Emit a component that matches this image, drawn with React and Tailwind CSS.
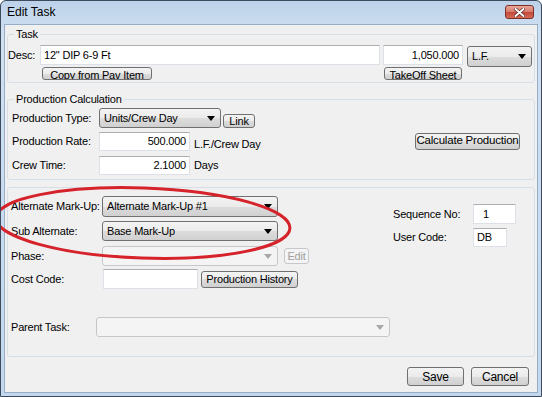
import React from 'react';

const font = { fontFamily: '"Liberation Sans", Arial, sans-serif' };

const Arrow = ({ disabled }) => (
  <svg width="8" height="5" viewBox="0 0 8 5" className="shrink-0">
    <path d="M0 0 H8 L4 5 Z" fill={disabled ? '#a8a8a8' : '#000'} />
  </svg>
);

const Combo = ({ value, className = '', disabled }) => (
  <div
    className={`flex items-center justify-between pl-[4px] pr-[5px] rounded-[3px] border ${
      disabled
        ? 'border-[#c4c8cc] bg-[#f4f4f4]'
        : 'border-[#707070] bg-[linear-gradient(#f3f3f3,#ebebeb_50%,#dddddd_50%,#d0d0d0)]'
    } ${className}`}
  >
    <span className="truncate">{value}</span>
    <Arrow disabled={disabled} />
  </div>
);

const Input = ({ value, className = '', right }) => (
  <div
    className={`flex items-center bg-white border border-[#dde1e7] border-t-[#abadb3] ${
      right ? 'justify-end pr-[3px]' : 'pl-[3px]'
    } ${className}`}
  >
    {value}
  </div>
);

const Btn = ({ children, className = '', disabled }) => (
  <div
    className={`flex items-center justify-center whitespace-nowrap overflow-hidden rounded-[3px] border ${
      disabled
        ? 'border-[#c4c8cc] bg-[#f4f4f4] text-[#a0a0a0]'
        : 'border-[#707070] bg-[linear-gradient(#f3f3f3,#ebebeb_50%,#dddddd_50%,#d0d0d0)]'
    } ${className}`}
  >
    {children}
  </div>
);

const Legend = ({ children }) => (
  <span className="self-start -mt-[7px] ml-[6px] px-[2px] bg-[#f0f0f0] leading-[13px]">{children}</span>
);

export default function App() {
  return (
    <div
      className="relative w-[542px] h-[397px] flex flex-col border border-[#3d4b5c] rounded-t-[6px] bg-[linear-gradient(#bcd2ea,#cfe0f1_30px,#c3d8ee)] text-[11px] tracking-[-0.2px] text-black overflow-hidden whitespace-nowrap"
      style={font}
    >
      {/* Title bar */}
      <div className="h-[23px] shrink-0 flex items-start pl-[6px] pr-[7px]">
        <span className="mt-[4px] text-[12px] leading-[14px] tracking-normal">Edit Task</span>
        <div className="ml-auto mt-[4px] w-[29px] h-[14px] rounded-[3px] border border-[#7d2f25] bg-[linear-gradient(#e9a89a,#d7786a_50%,#c2473a_50%,#d46b55)] flex items-center justify-center">
          <svg width="11" height="9" viewBox="0 0 11 9">
            <path d="M1.5 1 L9.5 8 M9.5 1 L1.5 8" stroke="#4a1a14" strokeWidth="3.2" strokeLinecap="round" />
            <path d="M1.5 1 L9.5 8 M9.5 1 L1.5 8" stroke="#fff" strokeWidth="2" strokeLinecap="round" />
          </svg>
        </div>
      </div>

      {/* Client area */}
      <div className="mx-[3px] h-[369px] border border-[#97aec6] bg-[#f0f0f0] flex flex-col px-[2px]">
        {/* Task */}
        <div className="mt-[9px] h-[49px] border border-[#d5dfe5] rounded-[3px] flex flex-col">
          <Legend>Task</Legend>
          <div className="mt-[4px] flex items-center h-[20px]">
            <span className="w-[32px]">Desc:</span>
            <Input value='12" DIP 6-9 Ft' className="w-[340px] h-[20px]" />
            <Input value="1,050.000" right className="ml-[3px] w-[80px] h-[20px]" />
            <Combo value="L.F." className="ml-[4px] w-[65px] h-[21px] mt-[2px]" />
          </div>
          <div className="mt-[2px] flex h-[13px]">
            <Btn className="ml-[34px] w-[110px] h-[13px] leading-[14px] items-start">Copy from Pav Item</Btn>
            <Btn className="ml-[232px] w-[78px] h-[13px] leading-[14px] items-start">TakeOff Sheet</Btn>
          </div>
        </div>

        {/* Production Calculation */}
        <div className="mt-[16px] h-[81px] border border-[#d5dfe5] rounded-[3px] flex flex-col">
          <Legend>Production Calculation</Legend>
          <div className="flex items-center">
            <div className="flex flex-col pl-[4px]">
              <div className="mt-[2px] flex items-center h-[20px]">
                <span className="w-[87px]">Production Type:</span>
                <Combo value="Units/Crew Day" className="w-[122px] h-[20px]" />
                <Btn className="ml-[2px] self-end w-[32px] h-[14px] leading-[12px]">Link</Btn>
              </div>
              <div className="mt-[4px] flex items-center h-[19px]">
                <span className="w-[87px]">Production Rate:</span>
                <Input value="500.000" right className="w-[91px] h-[19px]" />
                <span className="ml-[4px] mt-[6px]">L.F./Crew Day</span>
              </div>
              <div className="mt-[5px] flex items-center h-[19px]">
                <span className="w-[87px]">Crew Time:</span>
                <Input value="2.1000" right className="w-[91px] h-[19px]" />
                <span className="ml-[4px]">Days</span>
              </div>
            </div>
            <Btn className="ml-auto mr-[14px] mt-[1px] w-[105px] h-[17px] text-[11.5px]">Calculate Production</Btn>
          </div>
        </div>

        {/* Mark-up / codes */}
        <div className="mt-[7px] h-[170px] border border-[#d5dfe5] rounded-[3px] flex flex-col">
          <div className="flex">
            <div className="flex flex-col pl-[3px] pt-[8px] w-[310px]">
              <div className="flex items-center h-[20px]">
                <span className="w-[91px]">Alternate Mark-Up:</span>
                <Combo value="Alternate Mark-Up #1" className="w-[176px] h-[21px]" />
              </div>
              <div className="mt-[5px] flex items-center h-[20px]">
                <span className="w-[91px]">Sub Alternate:</span>
                <Combo value="Base Mark-Up" className="w-[176px] h-[20px]" />
              </div>
              <div className="mt-[5px] flex items-center h-[20px]">
                <span className="w-[91px]">Phase:</span>
                <Combo value="" disabled className="w-[176px] h-[20px]" />
                <Btn disabled className="ml-[6px] w-[25px] h-[16px]">Edit</Btn>
              </div>
              <div className="mt-[3px] flex items-center h-[20px]">
                <span className="w-[92px]">Cost Code:</span>
                <Input value="" className="w-[95px] h-[20px]" />
                <Btn className="ml-[3px] w-[97px] h-[17px]">Production History</Btn>
              </div>
            </div>
            <div className="flex flex-col pt-[16px] ml-[75px]">
              <div className="flex items-center h-[20px]">
                <span className="w-[80px]">Sequence No:</span>
                <Input value="1" className="w-[43px] h-[20px] pl-[9px]" />
              </div>
              <div className="mt-[4px] flex items-center h-[19px]">
                <span className="w-[80px]">User Code:</span>
                <Input value="DB" className="w-[34px] h-[19px]" />
              </div>
            </div>
          </div>
          <div className="mt-[28px] flex items-center h-[20px] pl-[3px]">
            <span className="w-[85px]">Parent Task:</span>
            <Combo value="" disabled className="w-[294px] h-[20px]" />
          </div>
        </div>

        {/* Buttons */}
        <div className="mt-[10px] flex justify-end gap-[7px] pr-[6px]">
          <Btn className="w-[57px] h-[19px] text-[12px]">Save</Btn>
          <Btn className="w-[58px] h-[19px] text-[12px]">Cancel</Btn>
        </div>
      </div>

      {/* Red annotation ellipse */}
      <svg className="absolute left-0 top-0 pointer-events-none" width="542" height="397">
        <ellipse
          cx="142"
          cy="222"
          rx="147"
          ry="35"
          transform="rotate(2 142 222)"
          fill="none"
          stroke="#d6232b"
          strokeWidth="3"
        />
      </svg>
    </div>
  );
}
